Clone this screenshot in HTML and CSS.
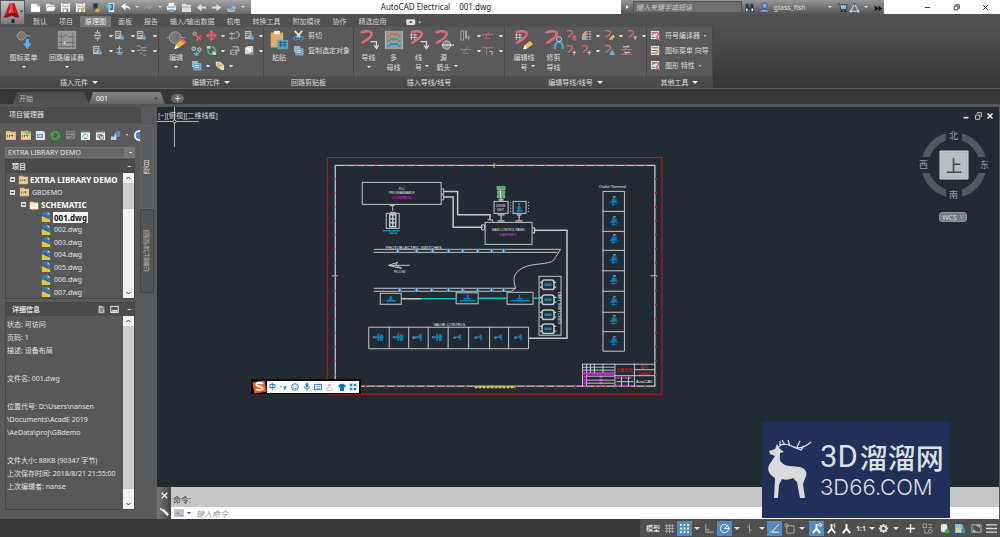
FILE: index.html
```
<!DOCTYPE html>
<html lang="zh-CN">
<head>
<meta charset="utf-8">
<title>AutoCAD Electrical 001.dwg</title>
<link rel="stylesheet" href="styles.css">
</head>
<body>
<svg class="defs" aria-hidden="true">
<defs>
<symbol id="new" viewBox="0 0 12 12"><path d="M1 2h7l3 3v6H1z" fill="#fff"/><path d="M8 2v3h3" fill="#aaa"/></symbol>
<symbol id="open" viewBox="0 0 12 12"><path d="M1 10V2h4l1 1h4v2" fill="#e6e6e6"/><path d="M1 10l2-5h9l-2 5z" fill="#fff" stroke="#777" stroke-width=".5"/></symbol>
<symbol id="save" viewBox="0 0 12 12"><path d="M1 1h9l1 1v9H1z" fill="#eee"/><path d="M3 1h6v4H3zM3 7h6v4H3z" fill="#858585"/><path d="M3.500 2h5v2h-5zM4 8h3v3H4z" fill="#fff"/></symbol>
<symbol id="saveas" viewBox="0 0 12 12"><use href="#save"/><path d="M6 10l4-5 2 1-4 5z" fill="#d9a458"/></symbol>
<symbol id="device" viewBox="0 0 12 12"><rect x="3" y="1" width="6" height="9" fill="#666"/><path d="M4 2h4v5H4z" fill="#333"/><path d="M5 11l2-4h4l-1 4z" fill="#e0a244"/></symbol>
<symbol id="cloud" viewBox="0 0 12 12"><rect x="4" y="1" width="6" height="10" fill="#eee"/><path d="M5 2h4v7H5z" fill="#237fa8"/><path d="M1 4h4V2l3 3-3 3V6H1z" fill="#66c7ed"/></symbol>
<symbol id="undo" viewBox="0 0 12 12"><path d="M1 5l5-4v3c4 0 5 2 5 5-1-2-2-3-5-3v3z" fill="#f4f4f4"/></symbol>
<symbol id="redo" viewBox="0 0 12 12"><path d="M11 5L6 1v3C2 4 1 6 1 9c1-2 2-3 5-3v3z" fill="#989898"/></symbol>
<symbol id="print" viewBox="0 0 12 12"><path d="M3 1h6v4H3z" fill="#fff"/><rect x="1" y="4" width="10" height="5" rx="1" fill="#eee"/><path d="M3 8h6v3H3z" fill="#58aee3"/><path d="M2 5h8v1H2z" fill="#378bc5"/></symbol>
<symbol id="folder" viewBox="0 0 12 12"><path d="M1 2h4l1 1h5v8H1z" fill="#ddd"/><path d="M1 5h10v1H1z" fill="#aaa"/></symbol>
<symbol id="left" viewBox="0 0 12 12"><path d="M1 6l5-4v3h5v2H6v3z" fill="#ddd"/></symbol>
<symbol id="right" viewBox="0 0 12 12"><path d="M11 6L6 2v3H1v2h5v3z" fill="#ddd"/></symbol>
<symbol id="surf" viewBox="0 0 12 12"><path d="M1 8c2-3 3 1 5-2s3-2 5 0L9 11H2z" fill="#a8b9c4"/><path d="M3 2l3 4M4 8h5" stroke="#4da7d4" fill="none"/></symbol>
<symbol id="coil" viewBox="0 0 12 12"><path d="M6 0v3M6 9v3M3 3h6M3 9h6M2 6h8" stroke="#ccc"/><rect x="4" y="3" width="4" height="6" rx="2" fill="none" stroke="#aaa"/></symbol>
<symbol id="sheet" viewBox="0 0 12 12"><path d="M1 1h7v9H1z" fill="#bbb"/><path d="M2 3h5M2 5h5M2 7h3" stroke="#555"/><path d="M9 5v4M7 8l2 3 2-3z" stroke="#4bb2eb" fill="#4bb2eb"/></symbol>
<symbol id="tree" viewBox="0 0 12 12"><path d="M6 1v9M2 8h8M3 4h6" stroke="#bbb"/><path d="M5 3l2 3H4zM4 9h5v2H4z" fill="#53aee1"/></symbol>
<symbol id="contact" viewBox="0 0 12 12"><path d="M1 1h4M5 3h6M1 6h3l2-2M6 6h5M4 9h3M8 11h3" stroke="#aaa" fill="none"/></symbol>
<symbol id="delete" viewBox="0 0 12 12"><circle cx="4" cy="4" r="2" fill="#777" stroke="#aaa"/><path d="M6 6l5 5M11 6l-5 5" stroke="#e7555b" stroke-width="2"/></symbol>
<symbol id="move" viewBox="0 0 12 12"><path d="M6 0l3 3H7v2h2V3l3 3-3 3V7H7v2h2l-3 3-3-3h2V7H3v2L0 6l3-3v2h2V3H3z" fill="#ed5b60"/></symbol>
<symbol id="align" viewBox="0 0 12 12"><path d="M0 4h7M0 9h7M3 2v4M3 7v4" stroke="#bbb"/><path d="M8 2c4 0 4 7 0 7" stroke="#ccc" fill="none"/></symbol>
<symbol id="nodes" viewBox="0 0 12 12"><circle cx="3" cy="4" r="2" fill="#777" stroke="#ccc"/><circle cx="9" cy="5" r="2" fill="#777" stroke="#ccc"/><path d="M6 7v3M3 9l3 3 3-3z" stroke="#4eafe5" fill="#4eafe5"/></symbol>
<symbol id="swap" viewBox="0 0 12 12"><path d="M1 1h4v3H1zM7 7h4v4H7z" fill="#ccc"/><path d="M2 5c0 5 3 5 5 5M6 2c4 0 4 3 4 5" fill="none" stroke="#42bc68" stroke-width="2"/></symbol>
<symbol id="retag" viewBox="0 0 12 12"><path d="M1 5h8v6H1z" fill="#999"/><path d="M3 7h4M3 9h4" stroke="#444"/><path d="M4 2h6v4M8 5l2 2 2-2" fill="none" stroke="#ccc"/></symbol>
<symbol id="cube" viewBox="0 0 12 12"><path d="M1 3l3-2h6v7L8 10H1z" fill="#ccc"/><path d="M1 3h7v7" fill="#fff"/><path d="M7 8h4v3H7z" fill="#888"/></symbol>
<symbol id="copy" viewBox="0 0 12 12"><path d="M1 1h7v7H1z" fill="#8eb5ca"/><path d="M3 4h8v7H3z" fill="#4f9dd0" stroke="#ddd" stroke-width=".5"/><path d="M4 6h5M4 8h5" stroke="#d6eef8"/></symbol>
<symbol id="tag" viewBox="0 0 12 12"><path d="M2 2h5l4 4v5H8L2 6z" fill="#ddd"/><path d="M5 3v6M3 6h6" stroke="#e7ad4c" stroke-width="2"/></symbol>
<symbol id="scissors" viewBox="0 0 12 12"><path d="M2 1l6 7M10 1L4 8" stroke="#ddd" stroke-width="2"/><circle cx="3" cy="9" r="2" fill="none" stroke="#3ba9e4"/><circle cx="9" cy="9" r="2" fill="none" stroke="#3ba9e4"/></symbol>
<symbol id="wire" viewBox="0 0 24 24"><path d="M2 3c8-3 19-2 10 7L3 16" fill="none" stroke="#dd6b70" stroke-width="3"/></symbol>
<symbol id="smallwire" viewBox="0 0 12 12"><path d="M1 1c4-1 8 0 5 4L2 8" fill="none" stroke="#d36b6e" stroke-width="1.500"/><path d="M7 8h4M9 6v5" stroke="#ccc"/></symbol>
<symbol id="redline" viewBox="0 0 12 12"><path d="M0 5h12M4 8l4-6M3 9h6" stroke="#c87075" fill="none"/></symbol>
<symbol id="list" viewBox="0 0 12 12"><path d="M1 1h3v10H1zM6 1h1v8H6zM8 8h3M9 6v5" stroke="#aaa" fill="none"/></symbol>
<symbol id="numbers" viewBox="0 0 12 12"><path d="M5 1h6v10H1V6h4z" fill="#aaa"/><path d="M6 3h5M6 6h5M6 9h5M8 1v10" stroke="#555"/><path d="M1 5l4-4 1 3-3 3z" fill="#dfae4c"/></symbol>
<symbol id="editsheet" viewBox="0 0 12 12"><path d="M1 1h9v10H1z" fill="#ddd"/><path d="M2 3h7M2 6h6M2 9h4" stroke="#666"/><path d="M4 10l5-5 2 2-5 4z" fill="#dfae4c"/></symbol>
<symbol id="redsheet" viewBox="0 0 12 12"><path d="M1 1h9v9H1z" fill="#ddd"/><path d="M2 3h6M2 8h3" stroke="#555"/><path d="M2 5c7-5 9-1 5 3l4 3" fill="none" stroke="#d96167" stroke-width="1.500"/></symbol>
<symbol id="gear" viewBox="0 0 12 12"><path d="M6 1v10M1 6h10M2.500 2.500l7 7M9.500 2.500l-7 7" stroke="#e3e3e3" stroke-width="2"/><circle cx="6" cy="6" r="3.500" fill="#e3e3e3"/><circle cx="6" cy="6" r="2" fill="#555"/></symbol>
<symbol id="annotate" viewBox="0 0 12 12"><path d="M6 1v5L2 11M6 6l4 5M6 5v3" stroke="#fff" stroke-width="2" fill="none"/></symbol>
<symbol id="dwg" viewBox="0 0 12 12"><path d="M2 0h6l3 3v8H2z" fill="#3a78b6"/><path d="M8 0v3h3" fill="#c9def0"/><path d="M1 5l10 4v3H1z" fill="#e2c63b"/><path d="M4 4l5 4" stroke="#223a5e"/></symbol>
<symbol id="project" viewBox="0 0 12 12"><path d="M1 1h5l1 1h5v9H1z" fill="#e3bf78"/><path d="M2 4h8v5H2z" fill="#f7e7c5"/><path d="M3 5v3M5 5v3M6 6h3M8 5v3" stroke="#695029"/></symbol>
<symbol id="terminal" viewBox="0 0 12 12"><path d="M5 0h3v2H5z" fill="#7c8992"/><path d="M4 3h5v3H4zM1 7h10v1H1zM3 9h6v1H3z" fill="#096eb8"/><path d="M5 2v9M2 6h7" stroke="#1589ca"/></symbol>
<symbol id="valve" viewBox="0 0 12 12"><path d="M1 5h3v3H1z" fill="#76869a"/><path d="M3 5h5v2H3zM8 3l3-1v8H9V7H6z" fill="#087eb2"/></symbol>
<symbol id="valvewide" viewBox="0 0 12 12"><path d="M0 5h3v2H0z" fill="#8a7c96"/><path d="M2 5h10v2H2zM5 2h2v8H5zM8 3h3v7H8z" fill="#087eb2"/></symbol>
<symbol id="limit" viewBox="0 0 14 10"><path d="M0 3h2M0 7h2M12 3h2M12 7h2" stroke="#ccc"/><rect x="2" y="1" width="10" height="8" rx="2" fill="#28313a" stroke="#c5c8ca" stroke-width="1.300"/><path d="M4 4h6v2H4z" fill="#1286c9"/></symbol>
<symbol id="sensor" viewBox="0 0 3 3"><path d="M0 0h3v3H0z" fill="#3f83ca"/><path d="M1.500 0v3" stroke="#9ec4ee" stroke-width=".8"/></symbol>
</defs>
</svg>

<div class="app">
<header class="top">
  <button class="logo" aria-label="应用程序菜单"><svg viewBox="0 0 25 25"><path d="M3 17L9 2h5l5 15h-4l-5-11-3 11z" fill="#c21e25"/><path d="M9 2h3l1 14H9l1-5z" fill="#ef4148"/><path d="M2 17l8-5 6 1 3 4h-4l-4-2-4 2z" fill="#8c131b"/><path d="M20 10h3l-1.500 2z" fill="#222"/><path d="M11 19h3v4h-3z" fill="#222"/></svg></button>
  <div class="bars">
    <div class="titlebar">
      <nav class="qat" aria-label="快速访问工具栏">
        <button aria-label="新建"><svg><use href="#new"/></svg></button><button aria-label="打开"><svg><use href="#open"/></svg></button><button aria-label="保存"><svg><use href="#save"/></svg></button><button aria-label="另存为"><svg><use href="#saveas"/></svg></button><button aria-label="从移动设备打开"><svg><use href="#device"/></svg></button><button aria-label="保存到移动设备"><svg><use href="#cloud"/></svg></button><button aria-label="放弃"><svg><use href="#undo"/></svg></button><button class="drop" aria-label="放弃列表"></button><button aria-label="重做"><svg><use href="#redo"/></svg></button><button class="drop" aria-label="重做列表"></button><button aria-label="打印"><svg><use href="#print"/></svg></button><button aria-label="项目"><svg><use href="#folder"/></svg></button><button aria-label="上一个"><svg><use href="#left"/></svg></button><button aria-label="下一个"><svg><use href="#right"/></svg></button><button aria-label="浏览"><svg><use href="#surf"/></svg></button><button class="drop" aria-label="自定义"></button>
      </nav>
      <h1 class="title"><span>AutoCAD Electrical</span><span>001.dwg</span></h1>
      <div class="infocenter">
        <button class="play" aria-label="折叠搜索"></button>
        <input class="search" type="text" placeholder="键入关键字或短语" aria-label="搜索">
        <button class="find" aria-label="搜索帮助"><svg viewBox="0 0 12 12"><path d="M2 2h3v4h2V2h3l1 9H7V8H5v3H1z" fill="#263947"/><path d="M2 7h2v3H2zM8 7h2v3H8z" fill="#d8e6ee"/></svg></button>
        <button class="user"><svg viewBox="0 0 12 12"><circle cx="6" cy="4" r="3" fill="#7fa1eb" stroke="#35528e"/><path d="M1 11c0-4 10-4 10 0z" fill="#8fb1f2" stroke="#35528e"/></svg><span>glass_fish</span></button>
        <button class="drop" aria-label="帐户"></button>
        <button aria-label="商店"><svg viewBox="0 0 12 12"><path d="M1 2h2l1 6h6l1-5H4" fill="#98bce4" stroke="#2f3f55"/><path d="M4 10h2M8 10h2" stroke="#222" stroke-width="2"/></svg></button>
        <button aria-label="应用"><svg viewBox="0 0 12 12"><path d="M6 2l4 8H2z" fill="none" stroke="#d8e4ff"/><circle cx="6" cy="2" r="1.500" fill="#53709e"/><circle cx="2" cy="10" r="1.500" fill="#b7cffa"/><circle cx="10" cy="10" r="1.500" fill="#b7cffa"/></svg></button>
        <button class="drop" aria-label="应用列表"></button>
        <button class="more" aria-label="更多"><svg viewBox="0 0 12 12"><path d="M2 4l4 3-4 3zM6 4l4 3-4 3z" fill="#111"/></svg></button>
      </div>
      <div class="winbtns">
        <button aria-label="最小化"><svg viewBox="0 0 12 12"><path d="M3 6h6" stroke="#333"/></svg></button>
        <button aria-label="还原"><svg viewBox="0 0 12 12"><path d="M3.500 4.500h4v4h-4zM5 4V3h4v4H8" fill="none" stroke="#333"/></svg></button>
        <button aria-label="关闭"><svg viewBox="0 0 12 12"><path d="M3 3l6 6M9 3L3 9" stroke="#333"/></svg></button>
      </div>
    </div>
    <nav class="tabs" aria-label="功能区选项卡">
      <button>默认</button><button>项目</button><button class="on">原理图</button><button>面板</button><button>报告</button><button>输入/输出数据</button><button>机电</button><button>转换工具</button><button>附加模块</button><button>协作</button><button>精选应用</button>
      <button class="cam" aria-label="显示"><svg viewBox="0 0 14 8"><rect x="1" y="2" width="8" height="5" rx="1" fill="#ddd"/><circle cx="5" cy="4.500" r="1" fill="#444"/><path d="M12 4h2l-1 2z" fill="#ddd"/></svg></button>
    </nav>
  </div>
</header>

<section class="ribbon" aria-label="功能区">
  <div class="panel">
    <div class="body">
      <button class="big w43"><svg viewBox="0 0 24 24"><path d="M2 7h18" stroke="#aaa"/><circle cx="9" cy="7" r="5" fill="#767676" stroke="#aaa"/><path d="M14 11h4v5h3l-5 7-5-7h3z" fill="#4eb3ef"/></svg><span>图标菜单</span><i></i></button>
      <button class="big w43"><svg viewBox="0 0 24 24"><path d="M1 1h22v22H1z" fill="#999"/><path d="M2 8h6l4-3M13 8h9M2 15h5m3 0h12M2 20h20M5 3v18M19 3v18" stroke="#666" fill="none"/><path d="M8 14h2v3H8z" fill="#ccc"/></svg><span>回路编译器</span><i></i></button>
      <div class="grid g22">
        <button class="sd" aria-label="多个插入"><svg><use href="#coil"/></svg></button><button class="sd" aria-label="端子"><svg><use href="#sheet"/></svg></button><button class="sd" aria-label="连接器"><svg><use href="#sheet"/></svg></button>
        <button class="sd" aria-label="PLC"><svg><use href="#sheet"/></svg></button><button class="sd" aria-label="接头"><svg><use href="#tree"/></svg></button><button class="sd" aria-label="开关"><svg><use href="#contact"/></svg></button>
      </div>
    </div>
    <h2>插入元件<i></i></h2>
  </div>
  <div class="panel">
    <div class="body">
      <button class="big w30"><svg viewBox="0 0 24 24"><path d="M1 9h22" stroke="#aaa"/><circle cx="11" cy="9" r="7" fill="#767676" stroke="#aaa"/><path d="M10 23l2-6 8-6 4 4-8 6z" fill="#efb24d"/><path d="M18 12l4 4 2-2-4-4z" fill="#e65b54"/><path d="M10 23l2-5 3 3z" fill="#fff"/></svg><span>编辑</span><i></i></button>
      <div class="stack">
        <div class="line"><button aria-label="删除元件"><svg><use href="#delete"/></svg></button><button class="sd" aria-label="移动"><svg><use href="#move"/></svg></button><button aria-label="对齐"><svg><use href="#align"/></svg></button><button class="sd" aria-label="切换"><svg><use href="#sheet"/></svg></button></div>
        <div class="line"><button aria-label="复制元件"><svg><use href="#nodes"/></svg></button><button class="sd" aria-label="替换"><svg><use href="#swap"/></svg></button><button aria-label="重新标记"><svg><use href="#retag"/></svg></button><button class="sd" aria-label="复制目录"><svg><use href="#cube"/></svg></button></div>
        <div class="line"><button class="sd" aria-label="复制回路"><svg><use href="#copy"/></svg></button><button class="sd" aria-label="属性"><svg><use href="#tag"/></svg></button></div>
      </div>
    </div>
    <h2>编辑元件<i></i></h2>
  </div>
  <div class="panel">
    <div class="body">
      <button class="big w26"><svg viewBox="0 0 24 24"><path d="M2 3h15v18H2z" fill="#dcae62"/><path d="M6 1h7v4H6z" fill="#eee"/><path d="M10 12h13v11H10z" fill="#5a9fc7"/><path d="M12 15h9M12 18h9M14 13v8M19 13v8" stroke="#2b5978"/></svg><span>粘贴</span></button>
      <div class="stack"><button class="text"><svg><use href="#scissors"/></svg>剪切</button><button class="text"><svg><use href="#copy"/></svg>复制选定对象</button></div>
    </div>
    <h2>回路剪贴板</h2>
  </div>
  <div class="panel">
    <div class="body">
      <button class="big w25"><svg viewBox="0 0 24 24"><use href="#wire"/><path d="M14 14h7v6m-3-2l3 4 3-4" stroke="#ddd" fill="none" stroke-width="1.500"/></svg><span>导线</span><i></i></button>
      <button class="big w25"><svg viewBox="0 0 24 24"><path d="M1 1h22v22H1z" fill="#999"/><path d="M2 1v22M22 1v22" stroke="#bbb"/><path d="M7 5h10M4 7h3m10 0h3" stroke="#d65d61" stroke-width="2"/><path d="M7 11h10M4 13h3m10 0h3" stroke="#36a765" stroke-width="2"/><path d="M7 17h10M4 19h3m10 0h3" stroke="#218fc5" stroke-width="2"/></svg><span>多<br>母线</span></button>
      <button class="big w25"><svg viewBox="0 0 24 24"><use href="#wire"/><path d="M1 6h9M1 9h9M3 4v8M7 4v8" stroke="#ccc" stroke-width="1"/><path d="M14 14h7v6m-3-2l3 4 3-4" stroke="#ddd" fill="none" stroke-width="1.500"/></svg><span class="side">线<br>号</span></button>
      <button class="big w25"><svg viewBox="0 0 24 24"><use href="#wire"/><circle cx="15" cy="18" r="5" fill="#888" stroke="#ccc"/><path d="M10 18h14" stroke="#fff"/></svg><span class="side">源<br>箭头</span></button>
      <div class="grid g22 two"><button class="sd" aria-label="阶梯"><svg><use href="#list"/></svg></button><button class="sd" aria-label="间隙"><svg><use href="#redline"/></svg></button><button class="sd" aria-label="触点"><svg><use href="#redline"/></svg></button><button class="sd" aria-label="三通"><svg viewBox="0 0 12 12"><path d="M0 3h12M5 3v7" stroke="#c87075"/><path d="M8 7h3v4" fill="none" stroke="#ccc"/></svg></button></div>
    </div>
    <h2>插入导线/线号</h2>
  </div>
  <div class="panel">
    <div class="body">
      <button class="big w32"><svg viewBox="0 0 24 24"><use href="#wire"/><path d="M1 6h9M1 9h9M3 4v8M7 4v8" stroke="#ccc"/><path d="M11 23l2-5 6-5 4 4-7 5z" fill="#efb95b"/><path d="M11 23l2-5 3 4z" fill="#fff"/></svg><span class="side">编辑线<br>号</span></button>
      <button class="big w25"><svg viewBox="0 0 24 24"><use href="#wire"/><path d="M18 14c-5 2-5 5-5 9M18 14c5 2 5 5 4 9" fill="none" stroke="#4b9ed6" stroke-width="3"/><circle cx="18" cy="11" r="3" fill="none" stroke="#ddd"/></svg><span>修剪<br>导线</span></button>
      <div class="stack">
        <div class="line"><button aria-label="删除线号"><svg viewBox="0 0 12 12"><use href="#smallwire"/><path d="M7 7l4 4M11 7l-4 4" stroke="#df4f54" stroke-width="2"/></svg></button><button class="sd" aria-label="线号表"><svg><use href="#numbers"/></svg></button><button class="sd" aria-label="编辑导线"><svg viewBox="0 0 12 12"><use href="#smallwire"/><path d="M5 11l5-6 2 2-5 4z" fill="#e7b851"/></svg></button><button class="sd" aria-label="移动线号"><svg viewBox="0 0 12 12"><use href="#smallwire"/><path d="M7 7h4l-2 4z" fill="#58b6e7"/></svg></button></div>
        <div class="line"><button aria-label="添加线号"><svg><use href="#smallwire"/></svg></button><button class="sd" aria-label="延伸导线"><svg><use href="#smallwire"/></svg></button><button aria-label="翻转线号"><svg viewBox="0 0 12 12"><use href="#smallwire"/><path d="M9 5l3 6H6z" fill="#68b5de"/></svg></button><button class="last" aria-label="交换线号"><svg viewBox="0 0 12 12"><path d="M0 5h12M0 10h12M3 7l3-5" stroke="#c87075"/><path d="M2 2h7l-2-2M10 8H4l2 2" fill="none" stroke="#ddd"/></svg></button></div>
      </div>
    </div>
    <h2>编辑导线/线号<i></i></h2>
  </div>
  <div class="panel">
    <div class="body">
      <div class="stack"><button class="text sd"><svg><use href="#redsheet"/></svg>符号编译器</button><button class="text"><svg><use href="#editsheet"/></svg>图标菜单 向导</button><button class="text sd"><svg><use href="#redsheet"/></svg>图形 特性</button></div>
    </div>
    <h2>其他工具<i></i></h2>
  </div>
</section>

<nav class="files" aria-label="文件选项卡"><button>开始</button><button class="on">001<span>×</span></button><button class="plus" aria-label="新图形">+</button></nav>

<main class="work">
  <aside class="manager">
    <div class="project">
      <h2>项目管理器</h2>
      <div class="tools"><button aria-label="打开项目"><svg><use href="#project"/></svg></button><button aria-label="新建项目"><svg viewBox="0 0 12 12"><use href="#project"/><path d="M8 0v6M5 3h7" stroke="#72cf41" stroke-width="2"/></svg></button><button aria-label="新建图形"><svg viewBox="0 0 12 12"><path d="M1 1h8l2 2v8H1z" fill="#ddeaf5"/><path d="M3 4v5M4 5h4v3M3 8h5" stroke="#466b97" fill="none"/></svg></button><button aria-label="刷新"><svg viewBox="0 0 12 12"><path d="M10 5C7 0 3 2 2 5M2 7c2 5 7 3 8 0" fill="none" stroke="#37ad32" stroke-width="2"/><path d="M0 4h5L2 8zM12 8H7l3-4z" fill="#37ad32"/></svg></button><button aria-label="任务列表"><svg viewBox="0 0 12 12"><path d="M1 1h10v9H1z" fill="#858585"/><path d="M2 3h8M2 6h5M6 10l4-5" stroke="#555"/></svg></button><button aria-label="更新"><svg viewBox="0 0 12 12"><path d="M1 1h10v10H1z" fill="#eef7f0"/><path d="M1 2h10" stroke="#222"/><path d="M3 8c0-5 6-4 5-1M4 9h4" stroke="#31945b" fill="none"/></svg></button><button aria-label="明细表"><svg viewBox="0 0 12 12"><path d="M1 1h10v10H1z" fill="#eee"/><path d="M1 2h10" stroke="#222"/><path d="M3 5h4v3H3zM5 6h4v4H5z" fill="none" stroke="#555" stroke-width=".8"/></svg></button><button class="sd" aria-label="发布"><svg viewBox="0 0 12 12"><path d="M1 7h6v4H1zM5 4h5v3H5z" fill="#bdd2e6"/><path d="M5 3l3-2h3v5l-3 2z" fill="#4e91bf"/></svg></button><button class="help" aria-label="帮助"><svg viewBox="0 0 12 12"><circle cx="6" cy="6" r="5" fill="#4a83bc" stroke="#eee" stroke-width="2"/></svg></button></div>
      <select aria-label="当前项目"><option>EXTRA LIBRARY DEMO</option></select>
      <section class="box treebox">
        <h3>项目<button aria-label="折叠项目">−</button></h3>
        <div class="scroller">
          <ul class="tree">
            <li class="strong"><b class="sign"></b><svg><use href="#project"/></svg>EXTRA LIBRARY DEMO</li>
            <li><b class="sign"></b><svg><use href="#project"/></svg>GBDEMO</li>
            <li class="lv1 strong"><b class="sign"></b><svg viewBox="0 0 12 12"><path d="M1 2h4l1 1h5v8H1z" fill="#f4dfa9"/><path d="M1 5h10v6H1z" fill="#fff1cb"/></svg>SCHEMATIC</li>
            <li class="lv2 strong"><svg><use href="#dwg"/></svg><mark>001.dwg</mark></li>
            <li class="lv2"><svg><use href="#dwg"/></svg>002.dwg</li><li class="lv2"><svg><use href="#dwg"/></svg>003.dwg</li><li class="lv2"><svg><use href="#dwg"/></svg>004.dwg</li><li class="lv2"><svg><use href="#dwg"/></svg>005.dwg</li><li class="lv2"><svg><use href="#dwg"/></svg>006.dwg</li><li class="lv2"><svg><use href="#dwg"/></svg>007.dwg</li>
          </ul>
          <div class="bar"><svg class="up" viewBox="0 0 10 10"><path d="M3 6l2-2 2 2" fill="none" stroke="#333"/></svg><div class="thumb short"></div><svg class="down" viewBox="0 0 10 10"><path d="M3 4l2 2 2-2" fill="none" stroke="#333"/></svg></div>
        </div>
      </section>
      <section class="box detailbox">
        <h3>详细信息<span class="hicons"><button aria-label="详细信息"><svg viewBox="0 0 12 12"><path d="M2 1h5l3 3v7H2z" fill="#bbb"/><path d="M4 5h6M4 8h4" stroke="#333"/></svg></button><button aria-label="预览"><svg viewBox="0 0 12 12"><rect x="1" y="2" width="10" height="8" fill="none" stroke="#ddd" stroke-width="1.500"/><path d="M2 8l3-2 2 1 3-1v3H2z" fill="#ddd"/></svg></button><button class="fold" aria-label="折叠详细信息">−</button></span></h3>
        <div class="scroller">
          <div class="details"><p>状态: 可访问<br>页码: 1<br>描述: 设备布局</p><p>文件名: 001.dwg</p><p>位置代号: D:\Users\nansen<br>\Documents\AcadE 2019<br>\AeData\proj\GBdemo</p><p>文件大小: 88KB (90347 字节)<br>上次保存时间: 2018/8/21 21:55:00<br>上次编辑者: nanse</p></div>
          <div class="bar"><svg class="up" viewBox="0 0 10 10"><path d="M3 6l2-2 2 2" fill="none" stroke="#333"/></svg><div class="thumb long"></div><svg class="down" viewBox="0 0 10 10"><path d="M3 4l2 2 2-2" fill="none" stroke="#333"/></svg></div>
        </div>
      </section>
    </div>
    <div class="sidetabs"><button class="on">项目</button><button>位置代号视图</button></div>
  </aside>

  <div class="stage">
    <div class="canvas">
      <svg class="drawing" viewBox="157 107 843 380" preserveAspectRatio="xMidYMin meet" role="img" aria-label="图形 001.dwg">
        <path d="M157 121.500h42M174.500 107v40" stroke="#aeb4ba"/><circle cx="174.500" cy="121.500" r="1.500" fill="#222a33" stroke="#ddd" stroke-width=".8"/>
        <rect x="327.500" y="157.500" width="335" height="237" class="red"/>
        <rect x="335.500" y="165.500" width="320" height="221" class="ln" stroke-width="1.300"/>
        <path d="M345 164.500h305" class="red" stroke-dasharray="2 8" stroke-width="2"/><path d="M365 387h285" class="red" stroke-dasharray="2 8" stroke-width="2"/><path d="M334.500 178v200M656.500 178v200" class="red" stroke-dasharray="2 12" stroke-width="2"/>
        <path d="M494.500 163v5M651 276h7" stroke="#d5c52d"/><path d="M332 276h6" stroke="#e89798"/><path d="M475 387.500h41" stroke="#d5d52d" stroke-width="2" stroke-dasharray="3 1"/>
        <g class="ln"><rect x="362.500" y="182.500" width="79" height="22"/><path d="M442 189h2v5h-2M442 195h2v5h-2"/><path d="M444 191.500h14V215h32.500v5M444 197h9.500v30.500H483" stroke-width="1.500"/><path d="M390 205.500h5M393 206v5M390 212.500h6M482 225h3v5h-3zM488 220h5v2"/><rect x="386.500" y="213.500" width="13" height="15"/><path d="M390 215h6v12h-6zM391 219h4M391 223h4M393 215v12" stroke-width="1.500"/><rect x="485.500" y="222.500" width="47" height="22"/><rect x="494.500" y="201.500" width="14" height="12"/><rect x="513.500" y="201.500" width="13" height="12"/><path d="M499 200h5M501.500 198v3M498 215h7M501.500 215v5M498 221h7M517 215h5M519.500 215v5M516 221h7M533 228h2v5h-2" stroke-width="1.300"/><path d="M511 202v12M529 202v12" stroke-dasharray="1 2"/><path d="M535 230.500h32.500v108H529" stroke-width="1.500"/>
        <path d="M374 249.500h187l-5 8c-3 8-16 5-29 9-11 4-14 10-12 18l1 4-4 3H374M374 252.500h184M374 288.500h142"/>
        <path d="M389 265.500h21M389 265.500l9-3-2 3 6 3-10-2z"/><rect x="380.500" y="293.500" width="21" height="11"/><rect x="456.500" y="293" width="22" height="11"/><rect x="507.500" y="292.500" width="26" height="12"/><path d="M402 299h20" stroke-width="1.500"/><rect x="539.500" y="276.500" width="22" height="59"/>
        <path d="M369 327.500h160V349H369zM389.500 327v22M409 327v22M428.500 327v22M448.500 327v22M469 327v22M490 327v22M509 327v22"/>
        <path d="M603.500 191.500H625V351.500H603.500zM603 211.500h22M603 231.500h22M603 250.500h22M603 271h22M603 291.500h22M603 312.500h22M603 332h22"/>
        <path d="M583 364.500h72M583 364v23M583 367.500h32M583 370.500h32M583 373.500h32M587 364v23M591 364v10M595 364v10M603.500 364v10M615.500 364v23M635 364v12M635 370h20M615 376h40M635 376v11"/></g>
        <path d="M422 299h34M479 298.500h28M534 298.500h9" stroke="#21bcbf" stroke-width="1.500"/>
        <path d="M583 374h32M584 377h3M584 380h3M584 383h3M584 386h3M600 377h3M600 380h3M600 383h3M600 386h3" stroke="#dd1fe2" stroke-width="2"/><path d="M587 376.500h28M587 380.500h28M587 383.500h28" class="ln"/><path d="M617 378h16M617 386h16" stroke="#c732a5" stroke-width="2" stroke-dasharray="3 1"/><path d="M617 382h17M622 377v10M629 377v10" class="ln"/>
        <g class="cad white"><text x="402" y="190" class="tiny">PLC</text><text x="402" y="194" class="tiny">PROGRAMMABLE</text><text x="509" y="231" class="tiny">MAIN CONTROL PANEL</text><text x="414" y="249">PHOTOELECTRIC SWITCHES</text><text x="400" y="273">FLOW</text><text x="450" y="326">VALVE CONTROL</text><text x="613" y="188">Outlet Terminal</text><text x="501" y="207" class="tiny">DRIVE</text><text x="501" y="211" class="tiny">UNIT</text><text x="645" y="383">AutoCAD</text><text transform="translate(558 308) rotate(90)" x="0" y="0">LIMIT SWITCHES</text></g>
        <g class="cad magenta"><text x="402" y="199">CONTROL</text><text x="508" y="236">CABINET</text></g><g class="cad redtext"><text x="625" y="372">设备布局</text><text x="645" y="369">图号</text><text x="645" y="375">DEMO</text></g>
        <path d="M383 231h17M390 233.500h8" stroke="#0796b6" stroke-width="1.500" stroke-dasharray="4 .500"/>
        <path d="M497.500 186.500h8v3h-8zM498 191h7v3h-7zM498 195h7v3h-7z" fill="#74a74c" stroke="#80bd7c"/><path d="M497 187h9M499 193h5M499 197h5" stroke="#189fca"/><path d="M501 190v8" stroke="#e5e75e"/>
        <path d="M519.500 203v9M517 208h5M517 211h6" stroke="#118bc2" stroke-width="1.500"/>
        <use href="#sensor" x="396" y="249" width="4" height="4"/><use href="#sensor" x="415" y="249" width="4" height="4"/><use href="#sensor" x="431" y="249" width="4" height="4"/><use href="#sensor" x="447" y="249" width="4" height="4"/><use href="#sensor" x="461" y="249" width="4" height="4"/><use href="#sensor" x="476" y="249" width="4" height="4"/><use href="#sensor" x="490" y="249" width="4" height="4"/><use href="#sensor" x="502" y="249" width="4" height="4"/>
        <use href="#sensor" x="398" y="288" width="4" height="4"/><use href="#sensor" x="415" y="288" width="4" height="4"/><use href="#sensor" x="430" y="288" width="4" height="4"/><use href="#sensor" x="447" y="288" width="4" height="4"/><use href="#sensor" x="461" y="288" width="4" height="4"/><use href="#sensor" x="476" y="288" width="4" height="4"/><use href="#sensor" x="490" y="288" width="4" height="4"/><use href="#sensor" x="502" y="288" width="4" height="4"/>
        <path d="M391 296v4M387 301h9M389 299h4M468 295v4M460 301h16M464 299h7M520 295v4M511 301h19M517 299h6" stroke="#0b86c5" stroke-width="1.500"/>
        <use href="#terminal" x="609" y="196" width="11" height="11"/><use href="#terminal" x="609" y="216" width="11" height="11"/><use href="#terminal" x="609" y="234" width="11" height="11"/><use href="#terminal" x="609" y="254" width="11" height="11"/><use href="#terminal" x="609" y="275" width="11" height="11"/><use href="#terminal" x="609" y="296" width="11" height="11"/><use href="#terminal" x="609" y="315" width="11" height="11"/><use href="#terminal" x="609" y="336" width="11" height="11"/>
        <use href="#valvewide" x="373" y="332" width="11" height="11"/><use href="#valvewide" x="393" y="332" width="11" height="11"/><use href="#valve" x="412" y="332" width="11" height="11"/><use href="#valvewide" x="432" y="332" width="11" height="11"/><use href="#valve" x="453" y="333" width="9" height="9"/><use href="#valve" x="474" y="333" width="9" height="9"/><use href="#valve" x="494" y="333" width="9" height="9"/><use href="#valve" x="514" y="333" width="9" height="9"/>
        <use href="#limit" x="540" y="279" width="17" height="12"/><use href="#limit" x="540" y="294" width="17" height="12"/><use href="#limit" x="540" y="309" width="17" height="12"/><use href="#limit" x="540" y="323" width="17" height="12"/>
      </svg>
      <div class="viewlabel">[−][俯视][二维线框]</div>
      <div class="viewbtns"><button aria-label="最小化视口"><svg viewBox="0 0 12 12"><path d="M3 8h6" stroke="#ddd" stroke-width="2"/></svg></button><button aria-label="还原视口"><svg viewBox="0 0 12 12"><path d="M3 5h5v5H3zM5 4V2h5v5H9" fill="none" stroke="#ddd"/></svg></button><button aria-label="关闭视口"><svg viewBox="0 0 12 12"><path d="M3 3l6 6M9 3L3 9" stroke="#eee" stroke-width="2"/></svg></button></div>
      <div class="compass"><svg viewBox="0 0 72 72" aria-hidden="true"><circle cx="36" cy="36" r="29" fill="none" stroke="#515961" stroke-width="7"/><path d="M28 2h16v10H28zM28 60h16v12H28zM60 28h12v16H60zM0 28h12v16H0z" fill="#222a33"/><path d="M22 22h28v28H22z" fill="#aeb3b8" stroke="#d3d6d9"/><path d="M24 24h24v24H24z" fill="#babec2"/></svg><span class="n">北</span><span class="w">西</span><span class="e">东</span><span class="s">南</span><button class="face">上</button></div>
      <button class="wcs">WCS<span>▽</span></button>
      <div class="ime"><svg class="sogou" viewBox="0 0 16 15"><path d="M1 3l12-2 2 11-12 2z" fill="#ef5820" stroke="#ef5820" stroke-linejoin="round"/><path d="M12 4C4 1 2 6 8 7s4 5-4 3" fill="none" stroke="#fff" stroke-width="2"/></svg><div class="imebar"><span>中</span>
        <svg viewBox="0 0 12 12"><path d="M2 5h2M7 6h3l-2 4" stroke="#2878cc" stroke-width="2" fill="none"/></svg>
        <svg viewBox="0 0 12 12"><circle cx="6" cy="6" r="5" fill="none" stroke="#2878cc" stroke-width="1.500"/><path d="M3 7c2 2 4 2 6 0M4 4v1M8 4v1" fill="none" stroke="#2878cc"/></svg>
        <svg viewBox="0 0 12 12"><rect x="4" y="0" width="4" height="7" rx="2" fill="#2878cc"/><path d="M2 5c0 5 8 5 8 0M6 9v3" fill="none" stroke="#2878cc" stroke-width="1.500"/></svg>
        <svg viewBox="0 0 12 12"><rect x="1" y="2" width="10" height="8" fill="none" stroke="#2878cc" stroke-width="1.500"/><path d="M3 5h6M3 8h6" stroke="#2878cc"/></svg>
        <svg viewBox="0 0 12 12"><circle cx="5" cy="3" r="2" fill="#b9bfd0"/><path d="M1 11V8l5-3 4 4-2 2z" fill="none" stroke="#b9bfd0" stroke-width="1.500"/></svg>
        <svg viewBox="0 0 12 12"><path d="M4 1h4l4 3-2 3-1-1v6H3V6L2 7 0 4z" fill="#1271ca"/></svg>
        <svg viewBox="0 0 12 12"><path d="M1 1h4v4H1zM7 1h4v4H7zM1 7h4v4H1zM7 7h4v4H7z" fill="#2878cc"/></svg></div></div>
    </div>
    <div class="command">
      <div class="cmdside"><button aria-label="关闭命令行"><svg viewBox="0 0 12 12"><path d="M3 3l6 6M9 3L3 9" stroke="#eee" stroke-width="1.500"/></svg></button><button aria-label="自定义"><svg viewBox="0 0 12 12"><path d="M2 1l1 3 2-1 6 6-2 2-6-6-2-1z" fill="#eee"/></svg></button></div>
      <div class="cmdbody"><div class="history">命令:</div><label class="prompt"><span>&gt;_</span><i></i><input type="text" placeholder="键入命令" aria-label="命令"></label></div>
    </div>
    <div class="brand">
      <svg viewBox="0 0 44 60" aria-hidden="true"><path d="M1 11l6-2 2-5 3 5 4 3-4 1c0 4-1 7 2 10 4 4 12 3 18 4 6 2 7 5 6 9l-3 8 2 14h-5l-3-16-4-4c-4 2-8 2-11 1l-3 6-1 13H6l1-20C0 34-2 28 3 22l4-6-5-2z" fill="#d9dadc"/><path d="M10 8C14 1 21 5 26 7s10 1 17-5M17 5L14 0M22 6L20 0M29 7l3-6M25 7l8 3 3-4M12 5V1" fill="none" stroke="#d9dadc" stroke-width="1.300"/></svg>
      <div class="words"><div class="cn"><span>3D</span>溜溜网</div><div class="en">3D66.COM</div></div>
    </div>
  </div>
</main>

<footer class="status">
  <button class="model">模型</button>
  <button aria-label="栅格"><svg viewBox="0 0 12 12"><path d="M1 3h10M1 6h10M1 9h10M3 1v10M6 1v10M9 1v10" stroke="#aaa"/></svg></button>
  <button class="on" aria-label="捕捉"><svg viewBox="0 0 12 12"><path d="M1 2h10M1 6h10M1 10h10" stroke="#fff" stroke-width="2" stroke-dasharray="2"/></svg></button><button class="drop" aria-label="捕捉设置"></button>
  <button aria-label="正交"><svg viewBox="0 0 12 12"><path d="M2 1v9h9M2 7h3v3" fill="none" stroke="#aaa"/></svg></button>
  <button class="on" aria-label="极轴"><svg viewBox="0 0 12 12"><circle cx="6" cy="6" r="4.500" fill="none" stroke="#fff"/><path d="M6 6h6M6 6l4-4" stroke="#fff"/></svg></button><button class="drop" aria-label="极轴设置"></button>
  <button aria-label="等轴测"><svg viewBox="0 0 12 12"><path d="M6 1v10M3 3l6 6" stroke="#999"/></svg></button><button class="drop" aria-label="等轴测设置"></button>
  <button class="on" aria-label="追踪"><svg viewBox="0 0 12 12"><path d="M11 1L3 10h8" fill="none" stroke="#fff"/><path d="M1 10h2" stroke="#63df79" stroke-width="2"/></svg></button>
  <button aria-label="对象捕捉"><svg viewBox="0 0 12 12"><path d="M3 3h8v8H3z" fill="none" stroke="#aaa"/><path d="M1 1h3v3H1z" fill="none" stroke="#aaa"/></svg></button><button class="drop" aria-label="对象捕捉设置"></button>
  <button class="on sep" aria-label="注释可见性"><svg viewBox="0 0 12 12"><use href="#annotate"/><circle cx="10" cy="2" r="1.500" fill="none" stroke="#fff"/></svg></button>
  <button aria-label="自动缩放"><svg viewBox="0 0 12 12"><use href="#annotate"/><path d="M10 0L8 3h2L9 6" stroke="#ddd" fill="none"/></svg></button>
  <button aria-label="注释"><svg><use href="#annotate"/></svg></button>
  <button class="scale">1:1</button><button class="drop near" aria-label="比例列表"></button>
  <button aria-label="工作空间"><svg><use href="#gear"/></svg></button><button class="drop" aria-label="工作空间列表"></button>
  <button class="sep" aria-label="注释监视器"><svg viewBox="0 0 12 12"><path d="M6 1v10M1 6h10" stroke="#eee" stroke-width="1.500"/></svg></button>
  <button class="sep" aria-label="隔离对象"><svg viewBox="0 0 12 12"><path d="M1 1h4v4H1zM7 2h4M7 5h4M3 7v4h4" fill="none" stroke="#aaa"/><circle cx="9" cy="9" r="2" fill="none" stroke="#aaa"/></svg></button>
  <button class="sep" aria-label="数据库"><svg viewBox="0 0 12 12"><rect x="2" y="1" width="7" height="9" rx="2" fill="#e8e8e8"/><circle cx="9" cy="9" r="2.500" fill="#2db456"/></svg></button>
  <button aria-label="同步"><svg viewBox="0 0 12 12"><path d="M1 1h7l2 2v8H1z" fill="#75c5ec"/><path d="M2 5h6v5H2z" fill="#e5d66e"/><path d="M8 6h4v5H8z" fill="#3b93d4"/></svg></button>
  <button class="sep" aria-label="全屏"><svg viewBox="0 0 12 12"><path d="M1 2h10v8H1z" fill="none" stroke="#bbb"/><path d="M6 3h3v2M3 7v2h2" fill="none" stroke="#eee"/></svg></button>
  <button aria-label="自定义"><svg viewBox="0 0 12 12"><path d="M0 2h12M0 6h12M0 10h12" stroke="#ddd" stroke-width="1.500"/></svg></button>
</footer>
</div>
</body>
</html>
```
FILE: styles.css
```
* { box-sizing: border-box; }
body { margin: 0; font: 7px/9px "Noto Sans", "Noto Sans CJK SC", sans-serif; color: #dedede; background: #393939; }
button, input, select { font: inherit; color: inherit; }
button { margin: 0; padding: 0; border: 0; background: none; display: flex; align-items: center; justify-content: center; white-space: nowrap; }
h1, h2, h3, p, ul { margin: 0; padding: 0; font-size: inherit; font-weight: 400; list-style: none; }
svg { display: block; width: 11px; height: 11px; flex: none; }
i { width: 0; height: 0; border: 2px solid transparent; border-top-color: #eee; border-bottom: 0; }
.defs { position: absolute; width: 0; height: 0; }
.app { display: flex; flex-direction: column; min-height: 100vh; }

.top { display: flex; height: 27px; background: #515151; }
.logo { width: 25px; height: 25px; background: linear-gradient(#c9c9c9, #777); border: 1px solid #555; }
.logo svg { width: 24px; height: 24px; }
.bars { flex: 1; display: flex; flex-direction: column; min-width: 0; }
.titlebar { display: flex; height: 14px; background: #fff; }
.qat { display: flex; width: 226px; padding-left: 3px; background: linear-gradient(#a3a3a3, #666); }
.qat button { width: 15px; }
.qat button.drop { width: 8px; }
.drop { width: 10px; }
.drop::after, .sd::after { content: ""; flex: none; border: 2px solid transparent; border-top-color: #ddd; border-bottom: 0; }
.title { flex: 1; display: flex; justify-content: center; gap: 9px; color: #222; font-size: 8px; line-height: 14px; }
.infocenter { display: flex; align-items: center; width: 263px; background: linear-gradient(#969696, #555); }
.play { width: 9px; }
.play::after { content: ""; border: 2px solid transparent; border-left: 3px solid #eee; border-right: 0; }
.search { width: 113px; height: 12px; background: #6f6f6f; border: 1px solid #555; padding: 0 2px; font-size: 7px; font-style: italic; }
.search::placeholder { color: #ccc; }
.infocenter > button { min-width: 12px; height: 14px; }
.infocenter .find { width: 16px; }
.infocenter .user { width: 70px; gap: 4px; justify-content: flex-start; padding-left: 2px; }
.infocenter .more { flex: 1; }
.winbtns { display: flex; width: 116px; padding-left: 29px; }
.winbtns button { width: 29px; }
.tabs { display: flex; align-items: flex-end; height: 13px; padding-left: 2px; }
.tabs button { padding: 0 6px; height: 11px; color: #d0d0d0; }
.tabs .on { background: #777; border-radius: 1px 1px 0 0; color: #eee; padding: 0 5px; margin: 0 1px; }
.tabs .cam { padding-left: 12px; }
.tabs .cam svg { width: 16px; height: 9px; }

.ribbon { display: flex; height: 62px; background: linear-gradient(#505050, #363636); border-bottom: 1px solid #606060; }
.panel { display: flex; flex-direction: column; background: #5a5a5a; border-right: 1px solid #484848; }
.panel .body { flex: 1; display: flex; align-items: flex-start; padding: 3px 0 0 2px; }
.panel h2 { display: flex; justify-content: center; align-items: center; gap: 4px; height: 12px; background: linear-gradient(#505050, #474747); }
.panel h2 i { border-width: 3px 3px 0; }
.big { flex-direction: column; justify-content: flex-start; gap: 3px; line-height: 10px; }
.big svg { width: 20px; height: 20px; }
.big .side::after { content: ""; display: inline-block; margin: 0 -7px 3px 3px; border: 2px solid transparent; border-top-color: #eee; border-bottom: 0; }
.w43 { width: 43px; }
.w32 { width: 34px; }
.w30 { width: 30px; }
.w26 { width: 26px; }
.w25 { width: 25px; }
.grid { display: grid; grid-template-columns: repeat(3, 22px); row-gap: 4px; padding-left: 4px; }
.grid.two { grid-template-columns: repeat(2, 22px); }
.sd { justify-content: flex-start; gap: 6px; }
.sd::after { border-width: 2px 1px 0; }
.grid .sd::after, .line .sd::after { width: 2px; }
.stack { display: flex; flex-direction: column; gap: 4px; }
.line { display: flex; gap: 4px; }
.line .sd { gap: 4px; }
.line .last { margin-left: 2px; }
.stack .text { gap: 4px; justify-content: flex-start; padding-right: 3px; margin-left: 1px; }

.files { display: flex; align-items: flex-end; height: 18px; padding: 0 0 0 13px; background: #373737; border-bottom: 3px solid #555; }
.files button { width: 76px; height: 12px; justify-content: flex-start; padding-left: 6px; background: linear-gradient(#4c4c4c, #555); color: #bdbdbd; clip-path: polygon(4px 0, 94% 0, 100% 100%, 0 100%); }
.files .on { background: linear-gradient(#858585, #656565); color: #fff; justify-content: space-between; padding: 0 7px; }
.files .on span { color: #333; }
.files .plus { width: 13px; height: 9px; margin: 0 0 1px 6px; padding: 0; justify-content: center; border-radius: 5px; background: #666; color: #eee; font-size: 10px; clip-path: none; }

.work { flex: 1; display: flex; background: #5a5a5a; }
.manager { width: 157px; flex: none; display: flex; color: #e2e2e2; }
.project { width: 135px; display: flex; flex-direction: column; padding: 0 0 9px 5px; }
.project > h2 { height: 16px; line-height: 15px; background: #4d4d4d; margin: 0 -6px 0 -5px; padding-left: 9px; }
.tools { display: flex; align-items: center; height: 24px; gap: 4px; margin-right: -6px; overflow: hidden; }
.tools .sd { gap: 5px; }
.tools .help { margin-left: 2px; }
.project select { appearance: none; width: 130px; height: 11px; padding: 0 2px; border: 1px solid #777; border-radius: 0; font-size: 7px; line-height: 9px; background: linear-gradient(#ddd, #ddd) 123px 4px / 3px 1px no-repeat, linear-gradient(90deg, #666 92%, #777 92%); }
.box { display: flex; flex-direction: column; border: 1px solid #464646; background: #585858; }
.box h3 { display: flex; align-items: center; justify-content: space-between; height: 13px; flex: none; padding: 0 3px 0 6px; background: #4b4b4b; font-weight: 700; }
.treebox { margin-top: 1px; height: 140px; }
.detailbox { flex: 1; margin-top: 3px; }
.hicons { display: flex; gap: 4px; }
.hicons .fold { margin-left: 4px; }
.hicons svg { width: 9px; height: 9px; }
.scroller { flex: 1; display: flex; min-height: 0; overflow: hidden; }
.tree { flex: 1; white-space: nowrap; }
.tree li { display: flex; align-items: center; gap: 3px; height: 13px; padding-left: 4px; }
.tree li:nth-child(even) { height: 12px; }
.tree svg { width: 10px; height: 10px; }
.tree .strong { font-weight: 700; font-size: 8px; color: #fff; gap: 2px; }
.tree .lv1 { padding-left: 15px; }
.tree .lv2 { padding-left: 35px; }
.tree mark { background: #f4f4f4; color: #111; padding: 1px; }
.sign { width: 5px; height: 5px; margin-right: 1px; border: 1px solid #ddd; background: linear-gradient(#444, #444) center / 3px 1px no-repeat #ccc; }
.bar { width: 11px; flex: none; display: flex; flex-direction: column; background: #f2f2f2; }
.bar .thumb { background: #cdcdcd; }
.bar .short { height: 26px; }
.bar .long { flex: 1; margin-bottom: 10px; }
.bar .up { width: 11px; height: 10px; }
.bar .down { width: 11px; height: 10px; margin-top: auto; }
.details { flex: 1; display: flex; flex-direction: column; gap: 15px; padding: 2px 1px; line-height: 13px; white-space: nowrap; }
.sidetabs { display: flex; flex-direction: column; width: 14px; margin: 18px 0 0 5px; }
.sidetabs button { writing-mode: vertical-rl; transform: rotate(180deg); width: 14px; height: 84px; border: 1px solid #444; background: #545454; border-radius: 2px; color: #aaa; }
.sidetabs .on { background: #5c5c5c; border-color: #666; color: #ddd; }

.stage { position: relative; flex: 1; display: flex; flex-direction: column; min-width: 0; border-right: 1px solid #555; }
.canvas { position: relative; flex: 1; background: #222a33; overflow: hidden; }
.drawing { width: 100%; height: auto; }
.ln { fill: none; stroke: #c4c8cb; }
.red { fill: none; stroke: #c21820; }
.cad { font: 4px "Liberation Sans Narrow", "Liberation Sans", "Noto Sans CJK SC", sans-serif; text-anchor: middle; }
.cad.white { fill: #eee; }
.cad .tiny { font-size: 3px; }
.cad.magenta { fill: #ed20ed; }
.cad.redtext { fill: #eb1f2c; }
.viewlabel { position: absolute; left: 1px; top: 4px; color: #ddd; }
.viewbtns { position: absolute; right: 4px; top: 4px; display: flex; gap: 2px; }
.viewbtns svg { width: 10px; height: 10px; }
.compass { position: absolute; right: 9px; top: 22px; width: 72px; height: 72px; color: #989ea5; font-size: 9px; line-height: 12px; }
.compass > svg { width: 72px; height: 72px; }
.compass span { position: absolute; }
.compass .n { left: 31px; top: 1px; }
.compass .s { left: 31px; bottom: 0; }
.compass .w { left: 1px; top: 30px; }
.compass .e { right: 1px; top: 30px; }
.compass .face { position: absolute; left: 24px; top: 24px; width: 24px; height: 24px; color: #454d56; font: 500 16px "Noto Sans CJK SC", sans-serif; }
.wcs { position: absolute; right: 32px; top: 105px; width: 28px; height: 10px; gap: 3px; background: #777d86; border: 1px solid #8e949c; border-radius: 3px; color: #d4d7dd; }
.wcs span { font-size: 4px; }
.ime { position: absolute; left: 94px; top: 272px; display: flex; align-items: center; height: 15px; background: #080808; padding: 0 2px 0 1px; }
.sogou { width: 15px; height: 14px; }
.imebar { display: flex; align-items: center; justify-content: space-around; height: 12px; width: 92px; background: #fff; color: #176fc6; font-weight: 700; }
.imebar svg { width: 8px; height: 8px; }
.command { display: flex; height: 32px; background: #fff; }
.cmdside { width: 14px; display: flex; flex-direction: column; justify-content: space-around; align-items: center; background: linear-gradient(90deg, #777, #444); }
.cmdbody { flex: 1; display: flex; flex-direction: column; color: #333; font-size: 8px; }
.history { height: 20px; padding: 7px 0 0 2px; background: #c6c6c6; line-height: 11px; }
.prompt { flex: 1; display: flex; align-items: center; gap: 3px; padding-left: 3px; }
.prompt span { background: #bbc4ce; font-size: 6px; line-height: 8px; padding: 0 2px; }
.prompt i { border-top-color: #444; }
.prompt input { flex: 1; height: 11px; border: 0; padding: 0 2px; background: none; font-style: italic; }
.prompt input::placeholder { color: #999; }
.brand { position: absolute; right: 49px; bottom: 1px; width: 188px; height: 96px; display: flex; align-items: center; gap: 8px; padding: 0 5px 0 6px; background: #203058; color: #dddfe2; }
.brand > svg { width: 44px; height: 60px; }
.words { flex: 1; display: flex; flex-direction: column; gap: 4px; white-space: nowrap; }
.cn { font: 500 28px/30px "Noto Sans CJK SC", sans-serif; display: flex; gap: 2px; }
.cn span { font: 31px/30px Roboto, sans-serif; }
.en { font: 300 22px/22px Inter, sans-serif; }

.status { display: flex; justify-content: flex-end; height: 18px; background: linear-gradient(90deg, #393939 64%, #505050 64%); padding-right: 1px; align-items: center; }
.status button { width: 15px; height: 15px; }
.status .drop { width: 10px; }
.status .drop::after { border-width: 3px 3px 0; }
.status .near { width: 8px; }
.status .on { background: #5689be; }
.status .model { width: 18px; color: #fff; }
.status .scale { width: 14px; font-weight: 700; }
.status .sep { margin-left: 2px; }
```
